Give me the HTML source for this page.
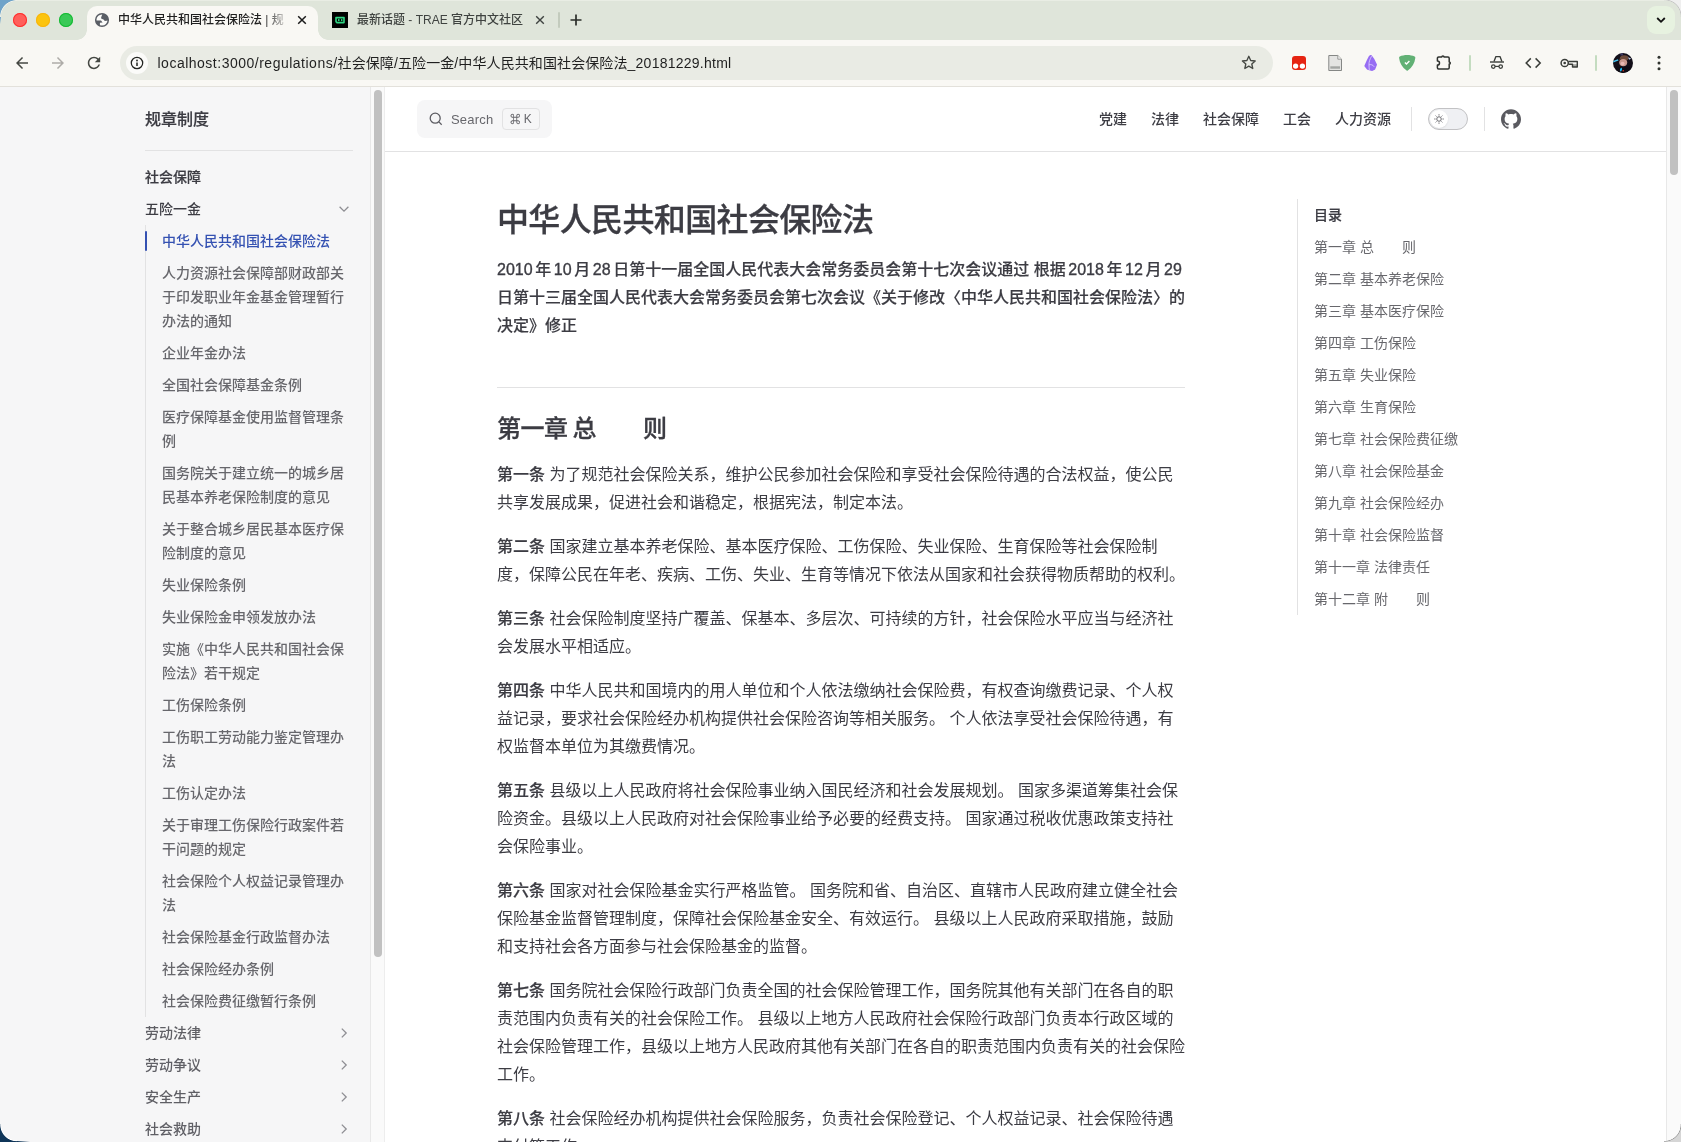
<!DOCTYPE html>
<html lang="zh-CN">
<head>
<meta charset="utf-8">
<title>中华人民共和国社会保险法 | 规章制度</title>
<style>
*{box-sizing:border-box;margin:0;padding:0}
html,body{width:1681px;height:1142px;overflow:hidden}
body{position:relative;background:#fff;font-family:"Liberation Sans","Noto Sans CJK SC",sans-serif;color:#3c3c43;-webkit-font-smoothing:antialiased}
.abs{position:absolute}
/* desktop corners behind window */
.c-tl{left:0;top:0;width:17px;height:24px;background:radial-gradient(circle at 16.700px 16.700px,transparent 15.500px,#eef0e8 15.900px,#eef0e8 16.200px,#6fa3c9 16.900px) 0 0/17px 17px no-repeat,linear-gradient(180deg,#6fa3c9 17px,rgba(60,80,100,0) 24px) 0 0/1px 24px no-repeat}
.c-tr{left:1664px;top:0;width:17px;height:17px;background:radial-gradient(circle at .800px 16.200px,transparent 15.600px,#c4c4c4 16.200px,#efefef 17px)}
.c-bl{left:0;top:1124px;width:30px;height:18px;background:radial-gradient(circle at 16.800px .700px,transparent 15.400px,#fff 15.800px,#fff 16.100px,#0f3558 16.900px) 0 0/17px 18px no-repeat,linear-gradient(90deg,#0f3558,rgba(15,53,88,0)) 17px 17px/13px 1px no-repeat,linear-gradient(0deg,#0f3558,rgba(15,53,88,0)) 0 -12px/1px 12px no-repeat}
.c-br{left:1664px;top:1124px;width:17px;height:18px;background:radial-gradient(circle at .500px .800px,transparent 15.800px,#9d9d9d 16.400px,#d6d6d6 17.200px)}
#win{will-change:transform;left:0;top:0;width:1681px;height:1142px;overflow:hidden;background:#fff}
/* ---------- browser chrome ---------- */
#tabstrip{left:0;top:0;width:1681px;height:40px;background:#dfe5da}
#toolbar{left:0;top:40px;width:1681px;height:47px;background:#f9f8f4;border-bottom:1px solid #e3e1db}
.light{left:0;top:0}
.dot{position:absolute;top:13px;width:14px;height:14px;border-radius:50%}
#tab1{left:87px;top:6px;width:231px;height:34px;background:#f9f8f4;border-radius:10px 10px 0 0}
#tab1:before,#tab1:after{content:"";position:absolute;bottom:0;width:10px;height:10px}
#tab1:before{left:-10px;background:radial-gradient(circle at 0 0,transparent 9.5px,#f9f8f4 10px)}
#tab1:after{right:-10px;background:radial-gradient(circle at 100% 0,transparent 9.5px,#f9f8f4 10px)}
.tabtxt{position:absolute;top:12px;font-size:12px;line-height:16px;white-space:nowrap;color:#1f1f1f;overflow:hidden;font-weight:500}
#omni{left:120px;top:6px;width:1153px;height:34px;border-radius:17px;background:#e9ebe4}
#url{left:157.500px;top:13px;font-size:14px;line-height:20px;color:#1f1f1f;white-space:nowrap;letter-spacing:.1px}
.sep{position:absolute;width:2px;height:16px;top:15px;background:#c4dcc0;border-radius:1px}
svg{display:block;position:absolute;overflow:visible}
/* ---------- page ---------- */
#page{left:0;top:87px;width:1681px;height:1055px;background:#fff;overflow:hidden}
#sidebar{left:0;top:0;width:385px;height:1055px;background:#f6f6f7;padding-left:145px}
.sb-title{height:63px;line-height:66px;font-size:16px;font-weight:500;-webkit-text-stroke:.2px #3c3c43;color:#3c3c43}
.sb-div{width:208px;height:1px;background:#e2e2e3}
.sb-nav{width:208px;padding-top:10px;font-size:14px;line-height:24px}
.l0{padding:4px 0;font-weight:500;-webkit-text-stroke:.2px #3c3c43;color:#3c3c43}
.l1{position:relative;padding:4px 0;font-weight:500;color:#3c3c43}
.l1.col{color:#5f5f65;font-weight:500}
.sub{border-left:1px solid #e2e2e3;padding-left:16px}
.it{position:relative;padding:4px 0;font-weight:500;color:#67676c;white-space:nowrap}
.it.act{color:#3451b2;font-weight:500}
.it.act i{position:absolute;left:-17px;top:6px;bottom:6px;width:2px;border-radius:2px;background:#3451b2}
.sb-track{position:absolute;left:370px;top:0;width:15px;height:1055px;background:#fafafa;border-left:1px solid #e8e8e8;border-right:1px solid #ededed}
.sb-thumb{position:absolute;left:374px;top:3px;width:8px;height:867px;border-radius:4px;background:#c1c1c1}
#nav{left:385px;top:0;width:1281px;height:65px;border-bottom:1px solid #e2e2e3;background:#fff}
.search{left:32px;top:13px;width:135px;height:38px;border-radius:8px;background:#f6f6f7}
.s-t{position:absolute;left:34px;top:.600px;line-height:38px;font-size:13px;font-weight:500;color:#67676c;letter-spacing:.2px}
.s-k{position:absolute;left:85px;top:8px;width:38px;height:22px;border:1px solid #e2e2e3;border-radius:4px;font-size:12px;font-weight:500;line-height:20px;text-align:center;color:#67676c}
.menu{right:263px;top:0;height:64px;line-height:64px;font-size:14px;font-weight:500;color:#3c3c43;white-space:nowrap}
.menu span{display:inline-block;padding:0 12px}
.s-k em{font-style:normal;font-size:10px;position:relative;top:-.500px;-webkit-text-stroke:.3px #67676c}
.vdiv{top:20px;width:1px;height:24px;background:#e2e2e3}
.toggle{left:1043px;top:21px;width:40px;height:22px;border-radius:11px;border:1px solid #c2c2c4;background:#eff0f3}
.toggle b{position:absolute;left:1px;top:1px;width:18px;height:18px;border-radius:50%;background:#fff;box-shadow:0 1px 2px rgba(0,0,0,.08)}
#doc{left:497px;top:112px;width:720px;color:#3c3c43;white-space:nowrap}
#doc h1{font-size:32px;line-height:40px;font-weight:500;-webkit-text-stroke:.3px #3c3c43;letter-spacing:-.02em}
#doc p{font-size:16px;line-height:28px;margin:16px 0;font-weight:400}
#doc b{font-weight:500;-webkit-text-stroke:.2px #3c3c43}
#doc h2{width:688px;margin:48px 0 16px;border-top:1px solid #e2e2e3;padding-top:24px;font-size:24px;line-height:32px;font-weight:500;-webkit-text-stroke:.3px #3c3c43;letter-spacing:-.02em;word-spacing:-1.300px}
#doc s{display:inline-block;width:2.600px}
#doc h1>span,#doc h2>span,#doc p>span{position:relative;top:.6px}
#doc .lead b{-webkit-text-stroke:.15px #3c3c43}
#doc .n{font-weight:400;-webkit-text-stroke:.35px #3c3c43}
#aside{left:1297px;top:112px;width:240px;border-left:1px solid #e2e2e3;padding-left:16px;font-size:14px;line-height:32px;color:#67676c;font-weight:400;white-space:nowrap}
.a-t{font-weight:500;color:#3c3c43;-webkit-text-stroke:.2px #3c3c43}
.pg-track{left:1666px;top:0;width:15px;height:1055px;background:#fafafa;border-left:1px solid #e8e8e8}
.pg-thumb{left:1670px;top:3px;width:8px;height:85px;border-radius:4px;background:#c1c1c1}
</style>
</head>
<body>
<div id="win" class="abs">
<!--CHROME-->
<div id="tabstrip" class="abs">
  <div class="abs" style="left:0;top:0;width:1681px;height:1px;background:#e9ede4"></div>
  <div class="dot" style="left:13px;background:#ff5f5b;box-shadow:inset 0 0 0 1px #ff2d2d"></div>
  <div class="dot" style="left:36px;background:#fbc40f;box-shadow:inset 0 0 0 1px #f8b40c"></div>
  <div class="dot" style="left:59px;background:#3ac957;box-shadow:inset 0 0 0 1px #14ba32"></div>
  <div id="tab1" class="abs"></div>
  <div class="tabtxt" style="left:118px;width:166px;-webkit-mask-image:linear-gradient(90deg,#000 146px,transparent 172px);mask-image:linear-gradient(90deg,#000 146px,transparent 172px)">中华人民共和国社会保险法 | 规章制度</div>
  <div class="tabtxt" style="left:357px;color:#3f4340">最新话题 - TRAE 官方中文社区</div>
  <div class="abs" style="left:558px;top:12px;width:2px;height:16px;background:#c3cbbd;border-radius:1px"></div>
  <div class="abs" style="left:1647px;top:6px;width:28px;height:28px;border-radius:9px;background:#e7f2e0"></div>
  <svg style="left:0;top:0" width="1681" height="40" viewBox="0 0 1681 40">
    <!-- globe favicon -->
    <defs><clipPath id="gl"><circle cx="102" cy="20" r="6.500"/></clipPath></defs>
    <circle cx="102" cy="20" r="6.300" fill="#fbfbf9" stroke="#5a5e65" stroke-width="1.500"/>
    <g clip-path="url(#gl)" fill="#5a5e65"><path d="M102.800 13l-1.700 4.500.3 1.200 2.100.9 1.300 1.300 3.500-.3 1-8z"/><path d="M95 20.500h6l1.600 1.900-2.700.4V26l-5 1z"/></g>
    <!-- tab close -->
    <path d="M298.200 16.200l7.600 7.600M305.800 16.200l-7.600 7.600" stroke="#1b1b1b" stroke-width="1.500" fill="none"/>
    <!-- trae favicon -->
    <rect x="332" y="12" width="16" height="16" fill="#000"/>
    <path d="M336 17.600h8v5h-7l-1-1z" fill="none" stroke="#2fd683" stroke-width="1.600" stroke-linejoin="round"/>
    <rect x="338" y="19.100" width="1.500" height="2" fill="#2fd683"/><rect x="341" y="19.100" width="1.400" height="2" fill="#2fd683"/>
    <path d="M536.200 16.200l7.600 7.600M543.800 16.200l-7.600 7.600" stroke="#3f4340" stroke-width="1.400" fill="none"/>
    <!-- plus -->
    <path d="M576 14.500v11M570.500 20h11" stroke="#2b2e2a" stroke-width="1.700" fill="none"/>
    <!-- chevron -->
    <path d="M1657.200 18L1661 21.800l3.800-3.800" stroke="#111" stroke-width="1.800" fill="none"/>
  </svg>
</div>
<div id="toolbar" class="abs">
  <div id="omni" class="abs"></div>
  <div class="abs" style="left:126px;top:12px;width:22px;height:22px;border-radius:50%;background:#fbfbf9"></div>
  <div id="url" class="abs"><span style="letter-spacing:.5px">localhost:3000/regulations/</span>社会保障/五险一金/中华人民共和国社会保险法<span style="letter-spacing:.25px">_20181229.html</span></div>
  <div class="sep" style="left:1469px"></div>
  <div class="sep" style="left:1595px"></div>
  <svg style="left:0;top:0" width="1681" height="47" viewBox="0 40 1681 47">
    <!-- back / forward / reload (24-unit material glyphs scaled) -->
    <g transform="translate(13 54) scale(.75)" fill="#454843"><path d="M20 11H7.830l5.590-5.590L12 4l-8 8 8 8 1.410-1.410L7.830 13H20v-2z"/></g>
    <g transform="translate(49 54) scale(.75)" fill="#aeaca8"><path d="M12 4l-1.410 1.410L16.170 11H4v2h12.170l-5.580 5.590L12 20l8-8z"/></g>
    <g transform="translate(84.700 53.700) scale(.775)" fill="#454843"><path d="M17.650 6.350C16.200 4.900 14.210 4 12 4c-4.420 0-7.990 3.580-7.990 8s3.570 8 7.990 8c3.730 0 6.840-2.550 7.730-6h-2.080c-.82 2.330-3.040 4-5.650 4-3.310 0-6-2.690-6-6s2.690-6 6-6c1.660 0 3.140.69 4.220 1.780L13 11h7V4l-2.350 2.350z"/></g>
    <!-- info -->
    <circle cx="137" cy="63" r="5.700" stroke="#222421" stroke-width="1.250" fill="none"/>
    <path d="M137 62.500v3.400" stroke="#222421" stroke-width="1.500"/><circle cx="137" cy="60.500" r=".9" fill="#222421"/>
    <!-- star -->
    <path d="M1248.800 56.300l1.900 4.200 4.500.5-3.400 3 .95 4.500-3.950-2.300-3.950 2.300.95-4.500-3.400-3 4.500-.5z" stroke="#454843" stroke-width="1.350" fill="none" stroke-linejoin="round"/>
    <!-- ext1 red -->
    <rect x="1292" y="56" width="14" height="14" rx="3" fill="#e62412"/><circle cx="1295.600" cy="66.100" r="2.650" fill="#fff"/><circle cx="1302.400" cy="66.100" r="2.650" fill="#fff"/>
    <!-- ext2 doc -->
    <path d="M1328.800 55.500h9l3.700 3.700v11.300h-12.700z" fill="#e4e4e2" stroke="#858785" stroke-width="1"/><path d="M1337.800 55.500v3.700h3.700" fill="#f4f4f2" stroke="#858785" stroke-width=".8"/><rect x="1330.300" y="66.300" width="9.700" height="2.400" fill="#a3a5a3"/>
    <!-- ext3 obsidian -->
    <path d="M1371 56l2.300 3.300 2.700 5.400-1.700 4.100-2.100 1.200-4.600-1.300-2.200-2.900 2.400-5.300 1.900-3.800z" fill="#976df3" stroke="#976df3" stroke-width="2" stroke-linejoin="round"/>
    <path d="M1371.600 56.200c-1.600 2.800-2.700 5.500-2.600 8.300.1 2.200.1 4 .3 5.500M1368.800 64.800c2-.6 4.200 0 5.400 2" stroke="#d8caff" stroke-width=".9" fill="none"/>
    <!-- ext4 shield -->
    <path d="M1407.200 55c-2.700 0-5.400.5-7.400 1.500-.6.300-.8.800-.7 1.500.6 5.200 3.100 9.500 7.500 12.500.4.300.8.300 1.200 0 4.400-3 6.900-7.300 7.500-12.500.1-.7-.1-1.200-.7-1.500-2-1-4.700-1.500-7.400-1.500z" fill="#62b175"/>
    <path d="M1404.900 62.400l1.600 1.600 2.900-3" stroke="#fff" stroke-width="1.400" fill="none"/>
    <!-- ext5 puzzle -->
    <path d="M1437.400 60.900V58.200a1.200 1.200 0 0 1 1.200-1.200h3.200a1.100 1.100 0 0 1 2.200 0h4a1.200 1.200 0 0 1 1.200 1.200v3.700a1.100 1.100 0 0 1 0 2.200v3.700a1.200 1.200 0 0 1-1.200 1.200h-9.400a1.200 1.200 0 0 1-1.200-1.200v-2.700a2.100 2.100 0 0 0 0-4.200z" stroke="#30332f" stroke-width="1.500" fill="none" stroke-linejoin="round"/>
    <!-- incognito -->
    <path d="M1494 61.600l1.900-5h2.200l1.900 0 1.900 5" stroke="#3a3d39" stroke-width="1.350" fill="none" stroke-linejoin="round"/>
    <path d="M1490 62h14" stroke="#3a3d39" stroke-width="1.400"/>
    <circle cx="1493.300" cy="66.600" r="1.750" stroke="#3a3d39" stroke-width="1.250" fill="none"/><circle cx="1500.700" cy="66.600" r="1.750" stroke="#3a3d39" stroke-width="1.250" fill="none"/><path d="M1495 66.400h4" stroke="#3a3d39" stroke-width="1.200"/>
    <!-- code -->
    <path d="M1530.800 58.400L1526.200 63l4.600 4.600M1535.600 58.400l4.600 4.600-4.600 4.600" stroke="#3a3d39" stroke-width="1.500" fill="none"/>
    <!-- key -->
    <circle cx="1564.700" cy="63" r="3.600" stroke="#3a3d39" stroke-width="1.500" fill="none"/><circle cx="1564.700" cy="63" r="1.300" fill="#3a3d39"/>
    <path d="M1572.600 64.200h4.800v2.800h-4.800z" fill="#a9aba7"/>
    <path d="M1568.300 61.500h9v5.500h-4.800v-2.800h-4" stroke="#3a3d39" stroke-width="1.400" fill="none" stroke-linejoin="round"/>
    <!-- avatar -->
    <defs><clipPath id="av"><circle cx="1623" cy="63" r="10"/></clipPath></defs>
    <g clip-path="url(#av)"><rect x="1613" y="53" width="20" height="20" fill="#130f19"/><rect x="1620.500" y="53.300" width="2.600" height="2.200" fill="#3d3866"/><ellipse cx="1624.300" cy="58" rx="4.200" ry="2.700" fill="#6d4b3b"/><ellipse cx="1623.200" cy="62.600" rx="4" ry="3.700" fill="#c9978c"/><ellipse cx="1622.600" cy="63.600" rx="2" ry="1.800" fill="#e8b9b4"/><path d="M1619 60.500c1.500-2 5.500-2.600 8-.8l-.6-2.400-6-.3z" fill="#6d4b3b"/><path d="M1617 66c2 1.500 4 2 7 1.500l3-1.500 5 2v6h-18z" fill="#0f0c14"/><path d="M1613 61.800l5.200-1.900" stroke="#45c6f2" stroke-width="1.500"/><ellipse cx="1621" cy="69.600" rx="1" ry="1.900" fill="#19b5ee" transform="rotate(15 1621 69.600)"/><circle cx="1623.300" cy="70.700" r=".8" fill="#d63a2a"/><path d="M1628 57.200l3.200 1.200-2 1.300z" fill="#bccbe8"/></g>
    <!-- dots -->
    <circle cx="1659" cy="57.200" r="1.500" fill="#30332f"/><circle cx="1659" cy="63" r="1.500" fill="#30332f"/><circle cx="1659" cy="68.800" r="1.500" fill="#30332f"/>
  </svg>
</div>
<!--/CHROME-->
<!--PAGE-->
<div id="page" class="abs">
  <!-- sidebar -->
  <div id="sidebar" class="abs">
    <div class="sb-title">规章制度</div>
    <div class="sb-div"></div>
    <div class="sb-nav">
      <div class="l0">社会保障</div>
      <div class="l1">五险一金<svg style="right:2px;top:9px" width="14" height="14" viewBox="0 0 14 14"><path d="M2.600 4.800L7 9.200l4.400-4.400" stroke="#8e8e93" stroke-width="1.300" fill="none"/></svg></div>
      <div class="sub">
        <div class="it act"><i></i>中华人民共和国社会保险法</div>
        <div class="it">人力资源社会保障部财政部关<br>于印发职业年金基金管理暂行<br>办法的通知</div>
        <div class="it">企业年金办法</div>
        <div class="it">全国社会保障基金条例</div>
        <div class="it">医疗保障基金使用监督管理条<br>例</div>
        <div class="it">国务院关于建立统一的城乡居<br>民基本养老保险制度的意见</div>
        <div class="it">关于整合城乡居民基本医疗保<br>险制度的意见</div>
        <div class="it">失业保险条例</div>
        <div class="it">失业保险金申领发放办法</div>
        <div class="it">实施《中华人民共和国社会保<br>险法》若干规定</div>
        <div class="it">工伤保险条例</div>
        <div class="it">工伤职工劳动能力鉴定管理办<br>法</div>
        <div class="it">工伤认定办法</div>
        <div class="it">关于审理工伤保险行政案件若<br>干问题的规定</div>
        <div class="it">社会保险个人权益记录管理办<br>法</div>
        <div class="it">社会保险基金行政监督办法</div>
        <div class="it">社会保险经办条例</div>
        <div class="it">社会保险费征缴暂行条例</div>
      </div>
      <div class="l1 col">劳动法律<svg style="right:2px;top:9px" width="14" height="14" viewBox="0 0 14 14"><path d="M4.800 2.600L9.200 7l-4.400 4.400" stroke="#8e8e93" stroke-width="1.300" fill="none"/></svg></div>
      <div class="l1 col">劳动争议<svg style="right:2px;top:9px" width="14" height="14" viewBox="0 0 14 14"><path d="M4.800 2.600L9.200 7l-4.400 4.400" stroke="#8e8e93" stroke-width="1.300" fill="none"/></svg></div>
      <div class="l1 col">安全生产<svg style="right:2px;top:9px" width="14" height="14" viewBox="0 0 14 14"><path d="M4.800 2.600L9.200 7l-4.400 4.400" stroke="#8e8e93" stroke-width="1.300" fill="none"/></svg></div>
      <div class="l1 col">社会救助<svg style="right:2px;top:9px" width="14" height="14" viewBox="0 0 14 14"><path d="M4.800 2.600L9.200 7l-4.400 4.400" stroke="#8e8e93" stroke-width="1.300" fill="none"/></svg></div>
    </div>
    <div class="sb-track"></div><div class="sb-thumb"></div>
  </div>
  <!-- nav -->
  <div id="nav" class="abs">
    <div class="search abs">
      <svg style="left:11px;top:11px" width="16" height="16" viewBox="0 0 16 16"><circle cx="7.200" cy="7.200" r="5" stroke="#5c5c62" stroke-width="1.300" fill="none"/><path d="M10.900 10.900l2.800 2.800" stroke="#5c5c62" stroke-width="1.300"/></svg>
      <span class="s-t">Search</span>
      <span class="s-k"><em>⌘</em> K</span>
    </div>
    <div class="menu abs"><span>党建</span><span>法律</span><span>社会保障</span><span>工会</span><span>人力资源</span></div>
    <div class="vdiv abs" style="left:1026px"></div>
    <div class="toggle abs"><b><svg style="left:3px;top:3px" width="12" height="12" viewBox="0 0 24 24"><circle cx="12" cy="12" r="4.500" fill="none" stroke="#67676c" stroke-width="2"/><path d="M12 2.500v2.500M12 19v2.500M2.500 12H5M19 12h2.500M5.300 5.300L7 7M17 17l1.700 1.700M5.300 18.700L7 17M17 7l1.700-1.700" stroke="#67676c" stroke-width="2"/></svg></b></div>
    <div class="vdiv abs" style="left:1099px"></div>
    <svg style="left:1116px;top:22px" width="20" height="20" viewBox="0 0 24 24"><path fill="#5a5a60" d="M12 .297c-6.630 0-12 5.373-12 12 0 5.303 3.438 9.800 8.205 11.385.6.113.82-.258.820-.577 0-.285-.010-1.040-.015-2.040-3.338.724-4.042-1.610-4.042-1.610C4.422 18.070 3.633 17.700 3.633 17.700c-1.087-.744.084-.729.084-.729 1.205.084 1.838 1.236 1.838 1.236 1.070 1.835 2.809 1.305 3.495.998.108-.776.417-1.305.760-1.605-2.665-.300-5.466-1.332-5.466-5.930 0-1.310.465-2.380 1.235-3.220-.135-.303-.540-1.523.105-3.176 0 0 1.005-.322 3.300 1.230.960-.267 1.980-.399 3-.405 1.020.006 2.040.138 3 .405 2.280-1.552 3.285-1.230 3.285-1.230.645 1.653.240 2.873.120 3.176.765.840 1.230 1.910 1.230 3.220 0 4.610-2.805 5.625-5.475 5.920.420.360.810 1.096.810 2.220 0 1.606-.015 2.896-.015 3.286 0 .315.210.690.825.570C20.565 22.092 24 17.592 24 12.297c0-6.627-5.373-12-12-12"/></svg>
  </div>
  <!-- content -->
  <div id="doc" class="abs">
    <h1><span>中华人民共和国社会保险法</span></h1>
    <p class="lead"><span><b><span class="n">2010</span><s></s>年<s></s><span class="n">10</span><s></s>月<s></s><span class="n">28</span><s></s>日第十一届全国人民代表大会常务委员会第十七次会议通过 根据<s></s><span class="n">2018</span><s></s>年<s></s><span class="n">12</span><s></s>月<s></s><span class="n">29</span><br>日第十三届全国人民代表大会常务委员会第七次会议《关于修改〈中华人民共和国社会保险法〉的<br>决定》修正</b></span></p>
    <h2><span>第一章 总　　则</span></h2>
    <p><span><b>第一条</b> 为了规范社会保险关系，维护公民参加社会保险和享受社会保险待遇的合法权益，使公民<br>共享发展成果，促进社会和谐稳定，根据宪法，制定本法。</span></p>
    <p><span><b>第二条</b> 国家建立基本养老保险、基本医疗保险、工伤保险、失业保险、生育保险等社会保险制<br>度，保障公民在年老、疾病、工伤、失业、生育等情况下依法从国家和社会获得物质帮助的权利。</span></p>
    <p><span><b>第三条</b> 社会保险制度坚持广覆盖、保基本、多层次、可持续的方针，社会保险水平应当与经济社<br>会发展水平相适应。</span></p>
    <p><span><b>第四条</b> 中华人民共和国境内的用人单位和个人依法缴纳社会保险费，有权查询缴费记录、个人权<br>益记录，要求社会保险经办机构提供社会保险咨询等相关服务。 个人依法享受社会保险待遇，有<br>权监督本单位为其缴费情况。</span></p>
    <p><span><b>第五条</b> 县级以上人民政府将社会保险事业纳入国民经济和社会发展规划。 国家多渠道筹集社会保<br>险资金。县级以上人民政府对社会保险事业给予必要的经费支持。 国家通过税收优惠政策支持社<br>会保险事业。</span></p>
    <p><span><b>第六条</b> 国家对社会保险基金实行严格监管。 国务院和省、自治区、直辖市人民政府建立健全社会<br>保险基金监督管理制度，保障社会保险基金安全、有效运行。 县级以上人民政府采取措施，鼓励<br>和支持社会各方面参与社会保险基金的监督。</span></p>
    <p><span><b>第七条</b> 国务院社会保险行政部门负责全国的社会保险管理工作，国务院其他有关部门在各自的职<br>责范围内负责有关的社会保险工作。 县级以上地方人民政府社会保险行政部门负责本行政区域的<br>社会保险管理工作，县级以上地方人民政府其他有关部门在各自的职责范围内负责有关的社会保险<br>工作。</span></p>
    <p><span><b>第八条</b> 社会保险经办机构提供社会保险服务，负责社会保险登记、个人权益记录、社会保险待遇<br>支付等工作。</span></p>
  </div>
  <!-- aside -->
  <div id="aside" class="abs">
    <div class="a-t">目录</div>
    <div>第一章 总　　则</div>
    <div>第二章 基本养老保险</div>
    <div>第三章 基本医疗保险</div>
    <div>第四章 工伤保险</div>
    <div>第五章 失业保险</div>
    <div>第六章 生育保险</div>
    <div>第七章 社会保险费征缴</div>
    <div>第八章 社会保险基金</div>
    <div>第九章 社会保险经办</div>
    <div>第十章 社会保险监督</div>
    <div>第十一章 法律责任</div>
    <div>第十二章 附　　则</div>
  </div>
  <!-- page scrollbar -->
  <div class="pg-track abs"></div><div class="pg-thumb abs"></div>
</div>
<!--/PAGE-->
<div class="abs c-tl"></div><div class="abs c-tr"></div><div class="abs c-bl"></div><div class="abs c-br"></div>
</div>
</body>
</html>
